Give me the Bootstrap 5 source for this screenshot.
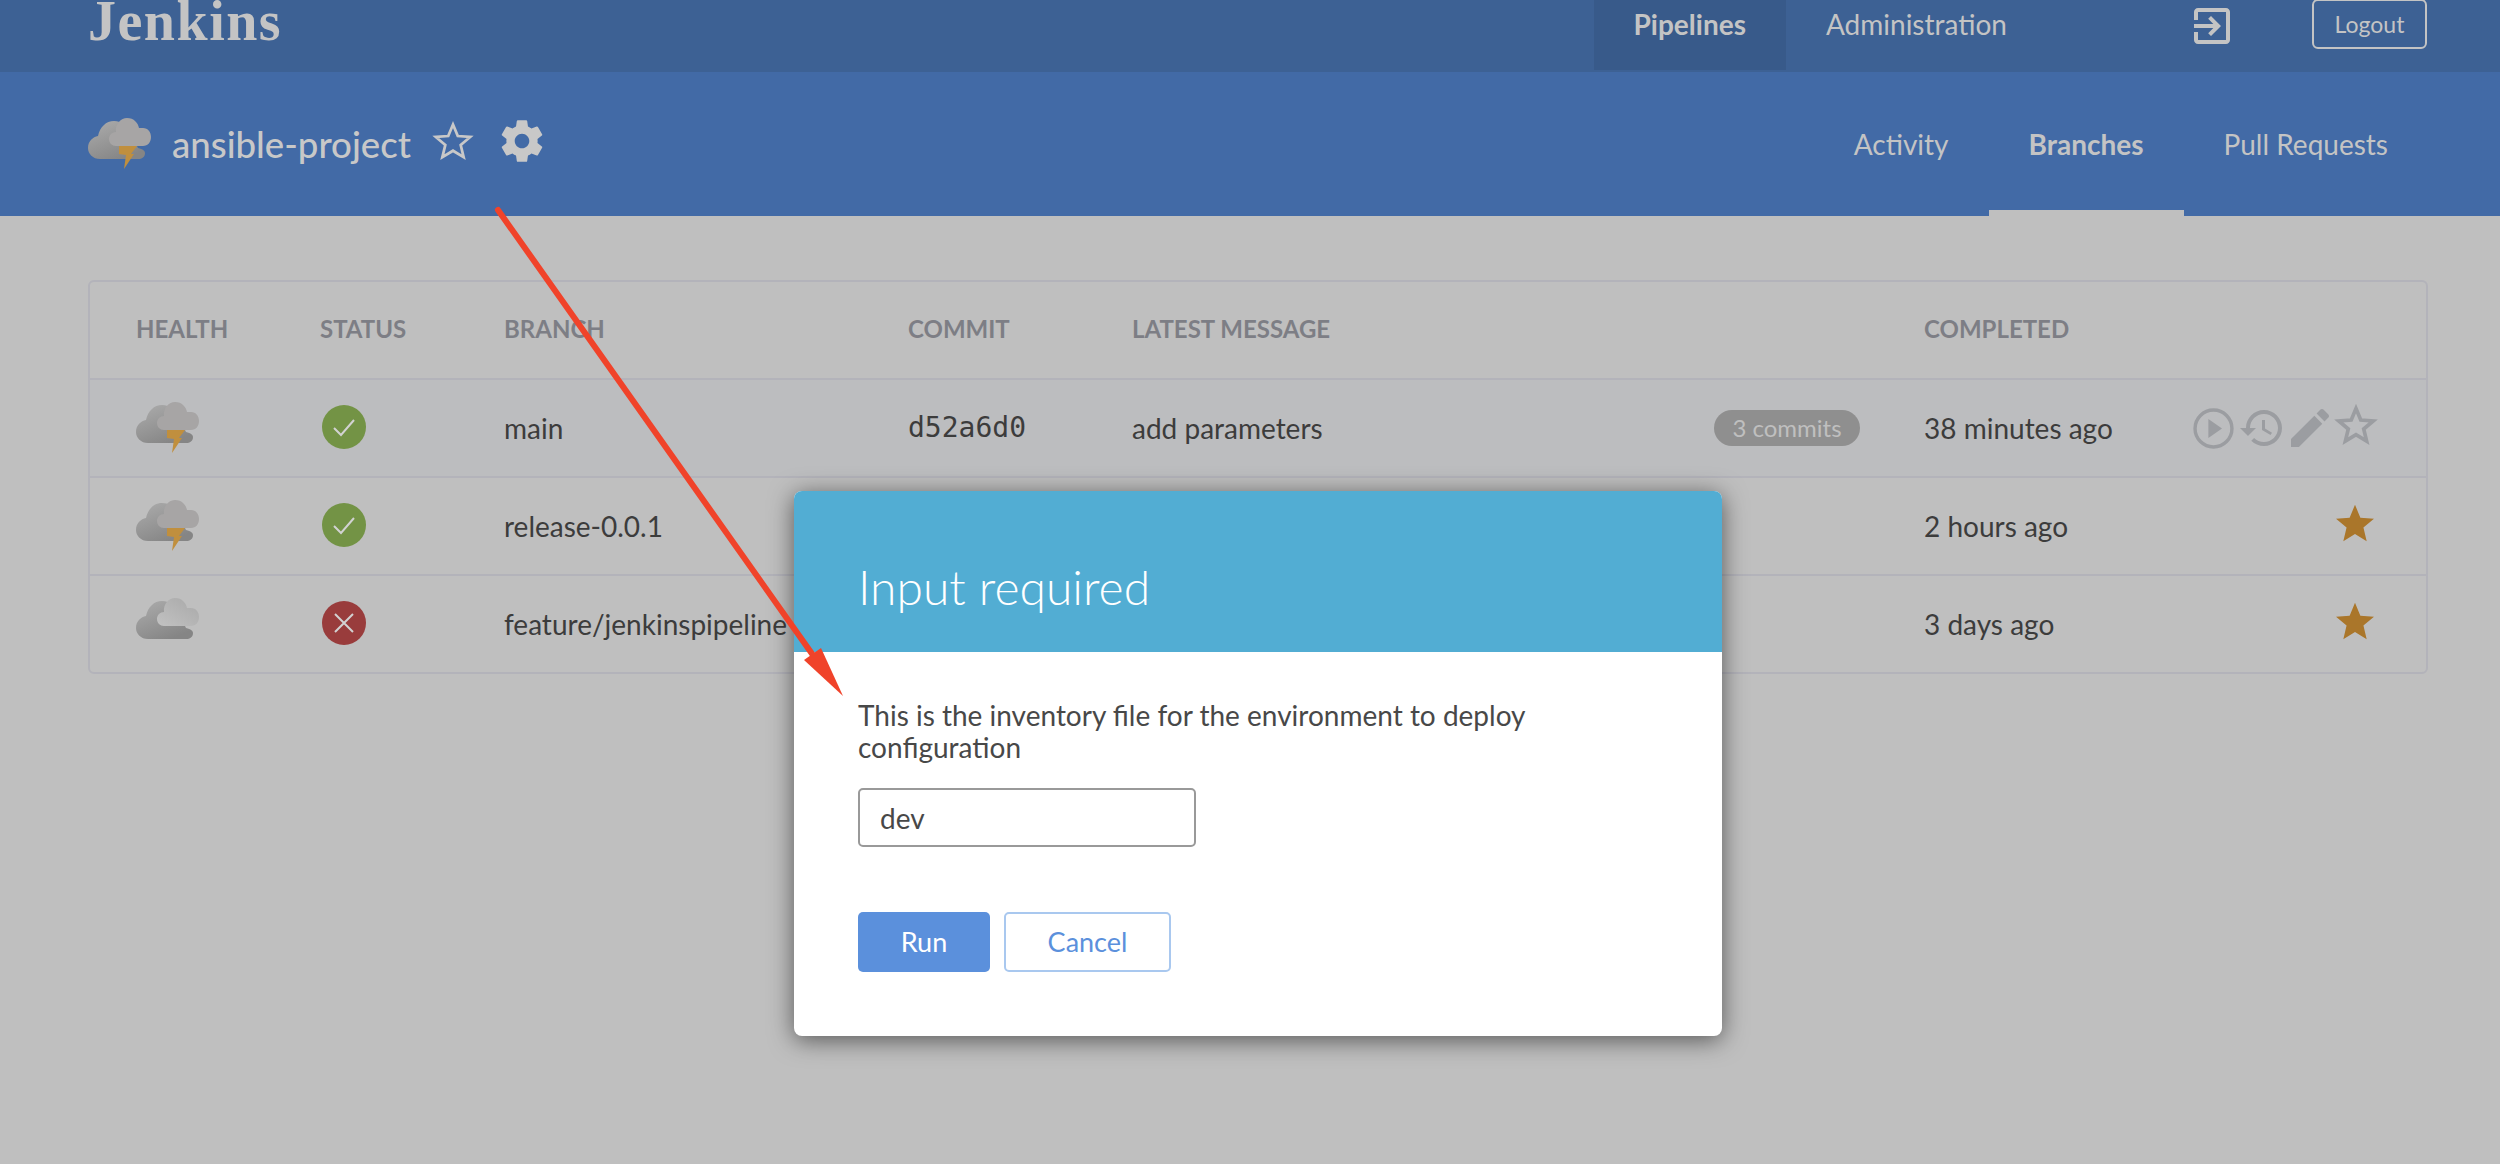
<!DOCTYPE html>
<html lang="en">
<head>
    <meta charset="UTF-8">
    <meta name="viewport" content="width=device-width, initial-scale=1.0">
    <link href="https://cdn.jsdelivr.net/npm/bootstrap@5.3.0/dist/css/bootstrap.min.css" rel="stylesheet">
    <title>Jenkins - ansible-project</title>
    <style>
        body {
            background-color: #bfbfbf;
            color: #3c3c3c;
            font-family: Lato, "Liberation Sans", sans-serif;
            font-size: 28px;
            min-height: 100vh;
            overflow: hidden;
            position: relative;
        }
        .top-bar {
            height: 72px;
            background-color: #3d6194;
            padding: 0 73px 0 88px;
        }
        .brand-name {
            font-family: "Liberation Serif", serif;
            font-weight: 700;
            font-size: 56px;
            letter-spacing: 1.5px;
            line-height: .75;
            color: #c4c4c4;
            text-decoration: none;
        }
        .top-tab {
            height: 70px;
            padding: 0 40px;
            color: #c4c4c4;
            font-size: 28px;
            line-height: 48px;
            text-decoration: none;
        }
        .top-tab.is-active {
            background-color: #385a8a;
            font-weight: 700;
        }
        .exit-icon {
            margin: 8px 82px 0 147px;
            width: 36px;
            height: 36px;
            fill: #c4c4c4;
        }
        .logout-btn {
            width: 115px;
            height: 50px;
            margin-top: -1px;
            padding: 0;
            font-size: 23px;
            color: #c4c4c4;
            border: 2px solid #c4c4c4;
            border-radius: 6px;
        }
        .sub-bar {
            height: 144px;
            background-color: #426aa6;
            padding: 0 72px 0 88px;
        }
        .project-name {
            font-size: 36.6px;
            font-weight: 500;
            color: #c8c8c8;
            margin-left: 20px;
            margin-right: 20px;
        }
        .head-icon {
            margin-bottom: 6px;
        }
        .head-gear {
            margin-left: 22px;
        }
        .sub-tab {
            height: 144px;
            padding: 0 40px;
            line-height: 144px;
            font-size: 28px;
            color: #c4c4c4;
            text-decoration: none;
        }
        .sub-tab.is-active {
            font-weight: 700;
            border-bottom: 6px solid #bfbfbf;
        }
        .runs-panel {
            margin: 64px 72px 0 88px;
            border: 2px solid #b3b3ba;
            border-radius: 6px;
            overflow: hidden;
        }
        .runs-table {
            table-layout: fixed;
            width: 100%;
            margin: 0;
            --bs-table-bg: transparent;
            --bs-table-color: #3c3c3c;
        }
        .col-health, .col-status { width: 184px; }
        .col-branch { width: 404px; }
        .col-commit { width: 224px; }
        .col-message { width: 792px; }
        .col-completed { width: 283px; }
        .runs-table th, .runs-table td {
            padding: 0 0 0 46px;
            vertical-align: middle;
            border-bottom: 2px solid #b3b3ba;
        }
        .runs-table th {
            height: 97px;
            padding-bottom: 2px;
            color: #7d7e85;
            font-size: 24px;
            font-weight: 700;
        }
        .runs-table td {
            height: 98px;
            font-size: 28px;
        }
        .runs-table td:last-child {
            padding-left: 0;
        }
        .runs-table tr:last-child td {
            border-bottom: 0;
            height: 97px;
        }
        .runs-table tr.is-hover td {
            background-color: #bcbdbf;
        }
        .runs-table td.commit-id {
            font-family: "DejaVu Sans Mono", monospace;
            font-size: 28px;
        }
        .commits-pill {
            background-color: #8f8f8f;
            color: #bfbfbf;
            font-size: 24px;
            font-weight: 400;
            width: 146px;
            height: 36px;
            border-radius: 18px;
            margin-right: 18px;
        }
        .status-dot {
            width: 44px;
            height: 44px;
            margin-left: 2px;
            margin-bottom: 3px;
            border-radius: 50%;
        }
        .status-ok { background-color: #739345; }
        .status-bad { background-color: #993c3c; }
        .row-actions {
            padding-right: 48px;
        }
        .star-on { fill: #aa762a; }
        .action-icon { fill: #9b9da1; }
        .action-line { fill: none; stroke: #9b9da1; stroke-width: 2; }
        .action-star { margin-bottom: 6px; }
        .action-history { margin-left: 6px; }
        .action-pencil { margin-left: 7px; }
        .action-outline { margin-left: 5px; margin-bottom: 6px; }
        .input-modal {
            position: absolute;
            left: 794px;
            top: 491px;
            width: 928px;
            height: 545px;
            border: 0;
            border-radius: 8px;
            overflow: hidden;
            box-shadow: 0 4px 24px rgba(0, 0, 0, .55);
        }
        .input-modal .modal-header {
            height: 161px;
            padding: 31px 64px 0;
            background-color: #52add3;
            border: 0;
            border-radius: 0;
        }
        .input-modal .modal-title {
            font-size: 48px;
            font-weight: 300;
            color: #fff;
        }
        .input-modal .modal-body {
            padding: 47px 64px 0;
        }
        .input-text {
            font-size: 28px;
            line-height: 32px;
            color: #484848;
            margin-bottom: 25px;
            width: 720px;
        }
        .input-field {
            width: 338px;
            height: 59px;
            font-size: 28px;
            padding: 0 20px;
            color: #484848;
            border: 2px solid #999;
            border-radius: 5px;
        }
        .run-btn, .cancel-btn {
            height: 60px;
            font-size: 27px;
            padding: 0;
            border-radius: 5px;
        }
        .run-btn {
            width: 132px;
            background-color: #5b90dc;
            border: 0;
            color: #fff;
        }
        .cancel-btn {
            width: 167px;
            background-color: #fff;
            border: 2px solid #a9c8ef;
            color: #5b90dc;
        }
        .modal-actions {
            margin-top: 65px;
            gap: 14px;
        }
        .note-arrow {
            position: absolute;
            left: 0;
            top: 0;
            width: 2500px;
            height: 1164px;
            pointer-events: none;
        }
    </style>
</head>
<body>

<svg width="0" height="0" class="position-absolute">
    <defs>
        <linearGradient id="cloudBack" x1="0" y1="0" x2="0.6" y2="1">
            <stop offset="0" stop-color="#adadad"/>
            <stop offset="1" stop-color="#858585"/>
        </linearGradient>
        <linearGradient id="cloudLight" x1="0" y1="1" x2="1" y2="0">
            <stop offset="0" stop-color="#c2c2c2"/>
            <stop offset="1" stop-color="#a8a8a8"/>
        </linearGradient>
        <symbol id="cloudStorm" viewBox="0 0 64 52">
            <path fill="url(#cloudBack)" d="M12 41C5 41 0 36 0 30C0 23 5 19 10 18C12 9 18 3 26 3C34 3 40 8 42 14L50 30C55 31 57 33 57 35C57 39 54 41 50 41Z"/>
            <path fill="#a7a5a5" d="M28 28C24 28 21 25 21 21C21 17 24 14 28 14C27 6 33 0 39 0C46 0 50 5 51 10H55C60 10 63 14 63 19C63 24 60 28 55 28Z"/>
            <polygon fill="#c08f3e" points="31,28 49,28 43,36 46,36 36,51 38,37 31,36"/>
        </symbol>
        <symbol id="cloudPlain" viewBox="0 0 64 52">
            <path fill="url(#cloudBack)" d="M12 41C5 41 0 36 0 30C0 23 5 19 10 18C12 9 18 3 26 3C34 3 40 8 42 14L50 30C55 31 57 33 57 35C57 39 54 41 50 41Z"/>
            <path fill="url(#cloudLight)" d="M28 28C24 28 21 25 21 21C21 17 24 14 28 14C27 6 33 0 39 0C46 0 50 5 51 10H55C60 10 63 14 63 19C63 24 60 28 55 28Z"/>
        </symbol>
    </defs>
</svg>

<header class="top-bar d-flex align-items-start">
    <a class="brand-name" href="#">Jenkins</a>
    <a class="top-tab is-active ms-auto" href="#">Pipelines</a>
    <a class="top-tab" href="#">Administration</a>
    <svg class="exit-icon" viewBox="3 3 18 18"><path d="M10.09 15.59L11.5 17l5-5-5-5-1.41 1.41L12.67 11H3v2h9.67l-2.58 2.59zM19 3H5c-1.11 0-2 .9-2 2v4h2V5h14v14H5v-4H3v4c0 1.1.89 2 2 2h14c1.1 0 2-.9 2-2V5c0-1.1-.9-2-2-2z"/></svg>
    <button class="btn logout-btn">Logout</button>
</header>

<div class="sub-bar d-flex align-items-center">
    <svg width="64" height="52"><use href="#cloudStorm"/></svg>
    <span class="project-name">ansible-project</span>
    <svg class="head-icon" width="44" height="44" viewBox="0 0 24 24" fill="none" stroke="#c8c8c8" stroke-width="1.5"><polygon points="12,3 14.6,9.3 21.4,9.8 16.2,14.2 17.8,20.8 12,17.3 6.2,20.8 7.8,14.2 2.6,9.8 9.4,9.3"/></svg>
    <svg class="head-icon head-gear" width="50" height="50" viewBox="0 0 24 24" fill="#c8c8c8"><path d="M19.43 12.98c.04-.32.07-.64.07-.98s-.03-.66-.07-.98l2.11-1.65c.19-.15.24-.42.12-.64l-2-3.46c-.12-.22-.39-.3-.61-.22l-2.49 1c-.52-.4-1.08-.73-1.69-.98l-.38-2.65C14.46 2.18 14.25 2 14 2h-4c-.25 0-.46.18-.49.42l-.38 2.65c-.61.25-1.17.59-1.69.98l-2.49-1c-.23-.09-.49 0-.61.22l-2 3.46c-.13.22-.07.49.12.64l2.11 1.65c-.04.32-.07.65-.07.98s.03.66.07.98l-2.11 1.65c-.19.15-.24.42-.12.64l2 3.46c.12.22.39.3.61.22l2.49-1c.52.4 1.08.73 1.69.98l.38 2.65c.03.24.24.42.49.42h4c.25 0 .46-.18.49-.42l.38-2.65c.61-.25 1.17-.59 1.69-.98l2.49 1c.23.09.49 0 .61-.22l2-3.46c.12-.22.07-.49-.12-.64l-2.11-1.65zM12 15.5c-1.93 0-3.5-1.57-3.5-3.5s1.57-3.5 3.5-3.5 3.5 1.57 3.5 3.5-1.57 3.5-3.5 3.5z"/></svg>
    <a class="sub-tab ms-auto" href="#">Activity</a>
    <a class="sub-tab is-active" href="#">Branches</a>
    <a class="sub-tab" href="#">Pull Requests</a>
</div>

<div class="runs-panel">
    <table class="table runs-table">
        <colgroup>
            <col class="col-health">
            <col class="col-status">
            <col class="col-branch">
            <col class="col-commit">
            <col class="col-message">
            <col class="col-completed">
            <col>
        </colgroup>
        <thead>
            <tr>
                <th>HEALTH</th>
                <th>STATUS</th>
                <th>BRANCH</th>
                <th>COMMIT</th>
                <th>LATEST MESSAGE</th>
                <th>COMPLETED</th>
                <th></th>
            </tr>
        </thead>
        <tbody>
            <tr class="is-hover">
                <td><svg class="d-block" width="64" height="52"><use href="#cloudStorm"/></svg></td>
                <td>
                    <div class="status-dot status-ok d-flex align-items-center justify-content-center">
                        <svg width="24" height="24" viewBox="0 0 24 24" fill="none" stroke="#d2d2d2" stroke-width="2"><path d="M2 13l7 7L22 5"/></svg>
                    </div>
                </td>
                <td>main</td>
                <td class="commit-id">d52a6d0</td>
                <td>
                    <div class="d-flex align-items-center justify-content-between">
                        <span>add parameters</span>
                        <span class="commits-pill d-flex align-items-center justify-content-center">3 commits</span>
                    </div>
                </td>
                <td>38 minutes ago</td>
                <td>
                    <div class="row-actions d-flex align-items-center justify-content-end">
                        <svg width="41" height="41" viewBox="0 0 24 24"><circle class="action-line" cx="12" cy="12" r="10.8"/><polygon class="action-icon" points="9,6.5 17,12 9,17.5"/></svg>
                        <svg class="action-history" width="44" height="44" viewBox="1 1 22 22"><path class="action-icon" d="M13 3c-4.97 0-9 4.03-9 9H1l3.89 3.89.07.14L9 12H6c0-3.87 3.13-7 7-7s7 3.13 7 7-3.13 7-7 7c-1.93 0-3.68-.79-4.94-2.06l-1.42 1.42C8.27 19.99 10.51 21 13 21c4.97 0 9-4.03 9-9s-4.03-9-9-9zm-1 5v5l4.28 2.54.72-1.21-3.5-2.08V8H12z"/></svg>
                        <svg class="action-pencil" width="38" height="38" viewBox="3 3 18 18"><path class="action-icon" d="M3 17.25V21h3.75L17.81 9.94l-3.75-3.75L3 17.25zM20.71 7.04c.39-.39.39-1.02 0-1.41l-2.34-2.34c-.39-.39-1.02-.39-1.41 0l-1.83 1.83 3.75 3.75 1.83-1.83z"/></svg>
                        <svg class="action-outline" width="44" height="44" viewBox="0 0 24 24"><polygon class="action-line" stroke-width="1.5" points="12,3 14.6,9.3 21.4,9.8 16.2,14.2 17.8,20.8 12,17.3 6.2,20.8 7.8,14.2 2.6,9.8 9.4,9.3"/></svg>
                    </div>
                </td>
            </tr>
            <tr>
                <td><svg class="d-block" width="64" height="52"><use href="#cloudStorm"/></svg></td>
                <td>
                    <div class="status-dot status-ok d-flex align-items-center justify-content-center">
                        <svg width="24" height="24" viewBox="0 0 24 24" fill="none" stroke="#d2d2d2" stroke-width="2"><path d="M2 13l7 7L22 5"/></svg>
                    </div>
                </td>
                <td>release-0.0.1</td>
                <td></td>
                <td></td>
                <td>2 hours ago</td>
                <td>
                    <div class="row-actions d-flex align-items-center justify-content-end">
                        <svg class="action-star" width="46" height="46" viewBox="0 0 24 24"><polygon class="star-on" points="12,2.5 14.8,9.2 21.9,9.8 16.4,14.4 18.1,21.5 12,17.7 5.9,21.5 7.6,14.4 2.1,9.8 9.2,9.2"/></svg>
                    </div>
                </td>
            </tr>
            <tr>
                <td><svg class="d-block" width="64" height="52"><use href="#cloudPlain"/></svg></td>
                <td>
                    <div class="status-dot status-bad d-flex align-items-center justify-content-center">
                        <svg width="22" height="22" viewBox="0 0 22 22" fill="none" stroke="#d2d2d2" stroke-width="2"><path d="M2 2l18 18M20 2L2 20"/></svg>
                    </div>
                </td>
                <td>feature/jenkinspipeline</td>
                <td></td>
                <td></td>
                <td>3 days ago</td>
                <td>
                    <div class="row-actions d-flex align-items-center justify-content-end">
                        <svg class="action-star" width="46" height="46" viewBox="0 0 24 24"><polygon class="star-on" points="12,2.5 14.8,9.2 21.9,9.8 16.4,14.4 18.1,21.5 12,17.7 5.9,21.5 7.6,14.4 2.1,9.8 9.2,9.2"/></svg>
                    </div>
                </td>
            </tr>
        </tbody>
    </table>
</div>

<!-- dialog sits over the table -->
<div class="modal-content input-modal bg-white">
    <div class="modal-header">
        <h5 class="modal-title">Input required</h5>
    </div>
    <div class="modal-body">
        <p class="input-text">This is the inventory file for the environment to deploy configuration</p>
        <input type="text" class="form-control input-field" value="dev">
        <div class="modal-actions d-flex">
            <button class="btn run-btn">Run</button>
            <button class="btn cancel-btn">Cancel</button>
        </div>
    </div>
</div>

<svg class="note-arrow" viewBox="0 0 2500 1164">
    <line x1="498" y1="210" x2="815" y2="658" stroke="#f0432a" stroke-width="6" stroke-linecap="round"/>
    <polygon fill="#f0432a" points="843,696 804,660 821,648"/>
</svg>

</body>
</html>
